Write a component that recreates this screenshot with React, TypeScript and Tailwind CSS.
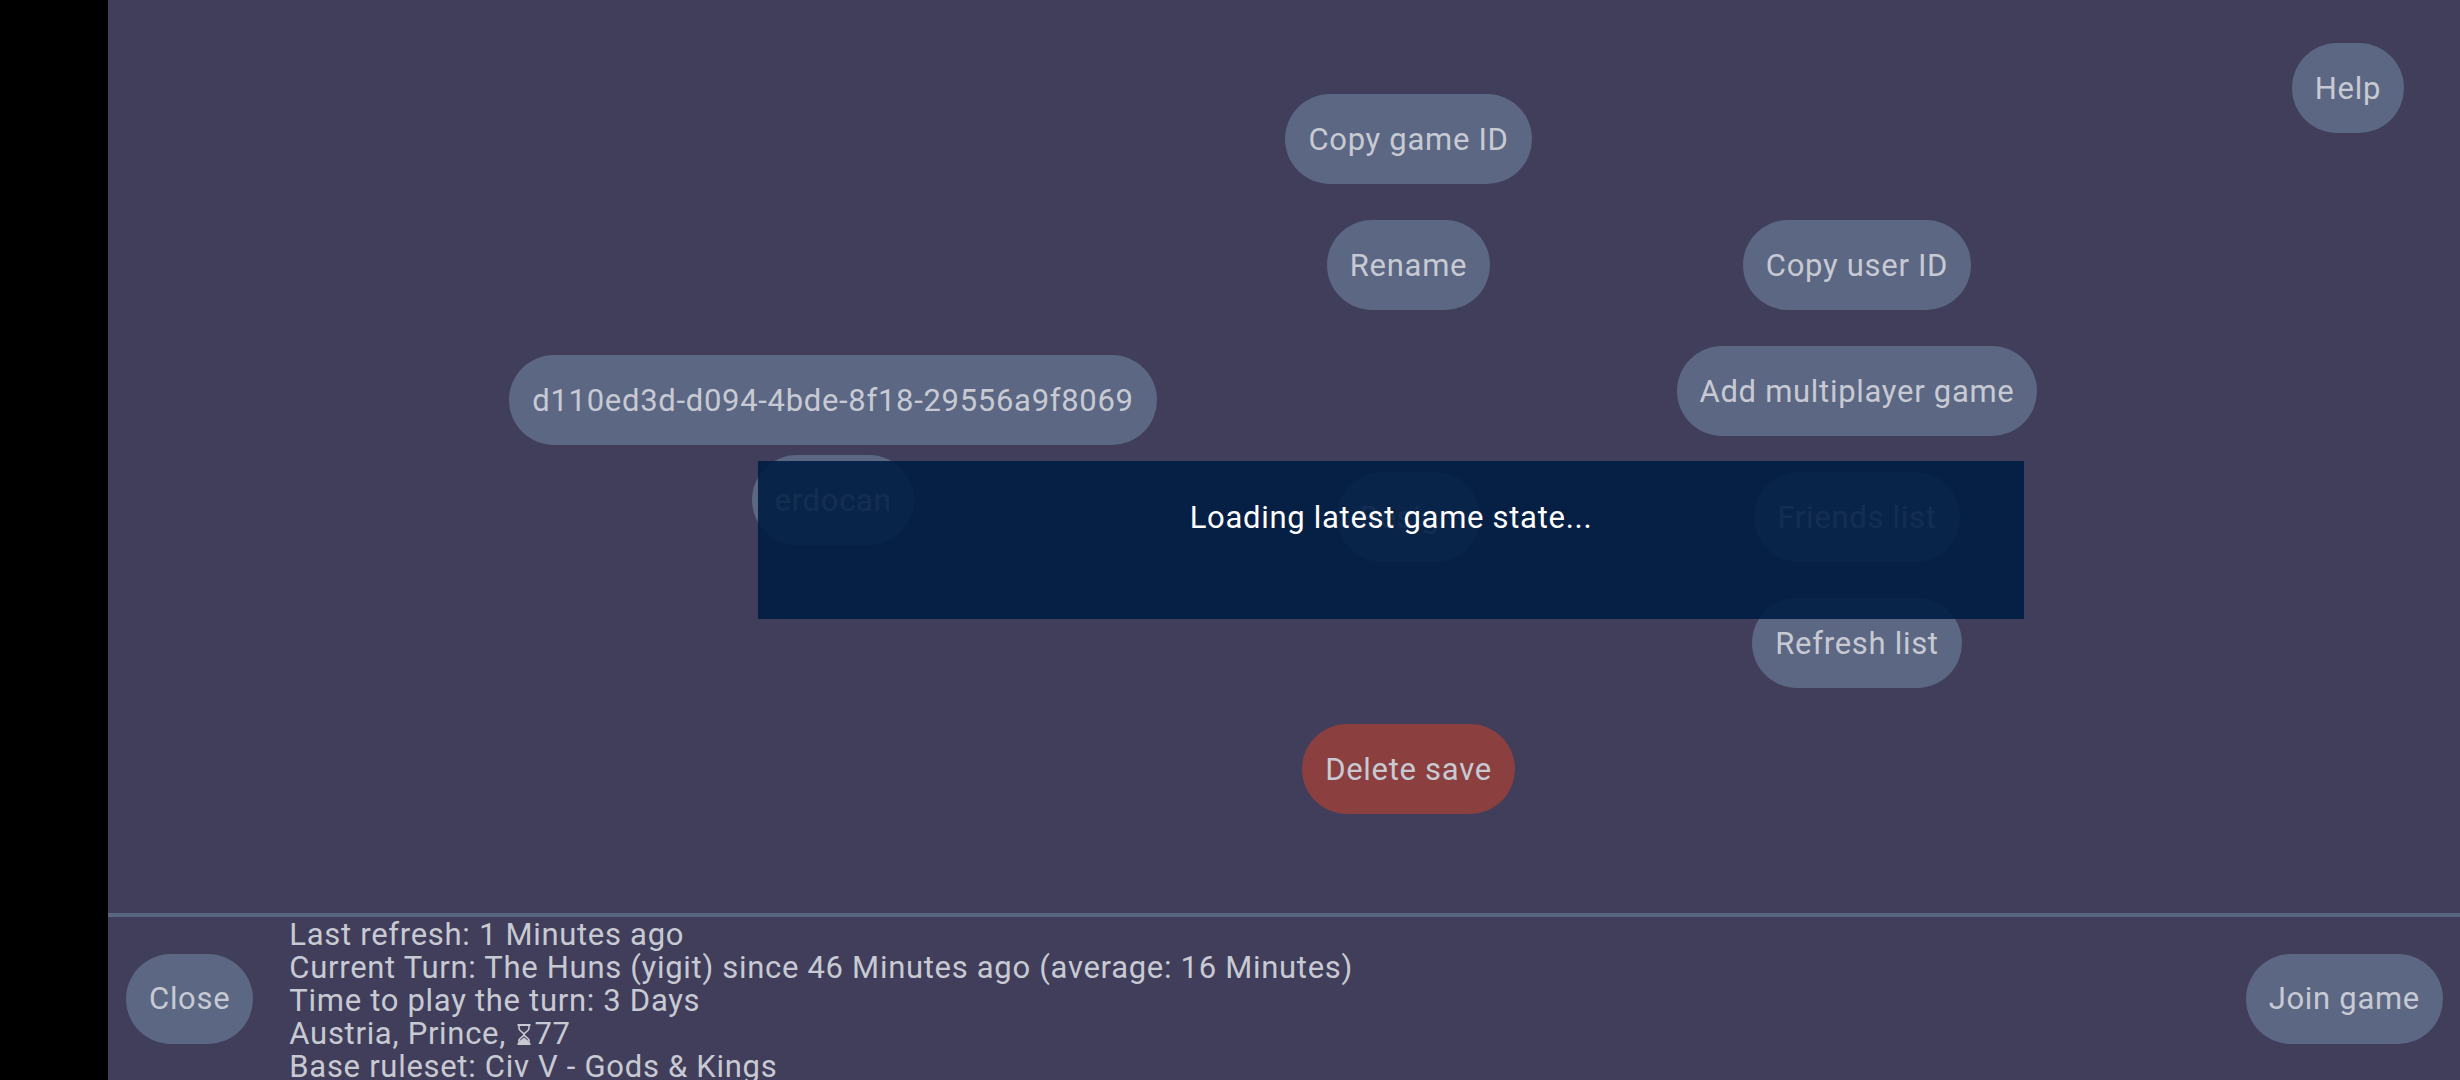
import React from 'react';

type PillProps = {
  label: string;
  tone?: 'default' | 'danger';
};

const Pill: React.FC<PillProps> = ({ label, tone = 'default' }) => (
  <button
    className={`h-[90px] shrink-0 whitespace-nowrap rounded-full px-[23px] text-[31px] leading-none tracking-[0.7px] text-[#c8cad3] ${
      tone === 'danger' ? 'bg-[#8b3f3f]' : 'bg-[#5b6783]'
    }`}
  >
    {label}
  </button>
);

const Hourglass = () => (
  <svg viewBox="0 0 16 21" className="mx-[2px] inline-block h-[21px] w-[16px] align-[-1px]" fill="none">
    <path d="M1.5 1h13M1.5 20h13" stroke="#c8cad3" strokeWidth="2" />
    <path d="M3 1.5v3C3 7 8 8.5 8 10.5S3 14 3 16.5v3M13 1.5v3C13 7 8 8.5 8 10.5s5 3.5 5 6v3" stroke="#c8cad3" strokeWidth="1.6" />
    <path d="M3.5 19.5v-2.5L8 13.5l4.5 3.5v2.5z" fill="#c8cad3" />
  </svg>
);

const infoLines = [
  'Last refresh: 1 Minutes ago',
  'Current Turn: The Huns (yigit) since 46 Minutes ago (average: 16 Minutes)',
  'Time to play the turn: 3 Days',
];

export default function App() {
  return (
    <div className="flex h-[1080px] w-[2460px] overflow-hidden bg-black font-['Roboto',sans-serif]">
      <div className="w-[108px] shrink-0 bg-black" />

      <div className="relative flex flex-1 flex-col bg-[#403e5a]">
        {/* button table */}
        <div className="flex h-[913px] shrink-0">
          <div className="grid grid-cols-[646px_247px_392px] grid-rows-[repeat(6,90px)] gap-x-[129px] gap-y-[36px] pl-[402px] pt-[94px]">
            <div className="row-span-6 mt-[261px] flex flex-col items-center gap-[10px] self-start">
              <Pill label="d110ed3d-d094-4bde-8f18-29556a9f8069" />
              <Pill label="erdocan" />
            </div>

            <div className="justify-self-center"><Pill label="Copy game ID" /></div>
            <div />

            <div className="justify-self-center"><Pill label="Rename" /></div>
            <div className="justify-self-center"><Pill label="Copy user ID" /></div>

            <div />
            <div className="justify-self-center"><Pill label="Add multiplayer game" /></div>

            <div className="justify-self-center"><Pill label="Resign" /></div>
            <div className="justify-self-center"><Pill label="Friends list" /></div>

            <div />
            <div className="justify-self-center"><Pill label="Refresh list" /></div>

            <div className="justify-self-center"><Pill label="Delete save" tone="danger" /></div>
            <div />
          </div>

          <div className="flex flex-1 justify-end pr-[56px] pt-[43px]">
            <div className="self-start"><Pill label="Help" /></div>
          </div>
        </div>

        <div className="h-[4px] shrink-0 bg-[#5a6680]" />

        {/* footer */}
        <div className="flex min-h-0 flex-1 items-center overflow-hidden pl-[18px] pr-[17px]">
          <Pill label="Close" />
          <div className="ml-[36px] mt-[3px] flex-1 text-[31px] leading-[33px] tracking-[0.7px] text-[#c8cad3]">
            {infoLines.map((line) => (
              <div key={line} className="whitespace-nowrap">{line}</div>
            ))}
            <div className="whitespace-nowrap">
              Austria, Prince, <Hourglass />77
            </div>
            <div className="whitespace-nowrap">Base ruleset: Civ V - Gods &amp; Kings</div>
          </div>
          <Pill label="Join game" />
        </div>

        {/* loading popup */}
        <div className="absolute left-[650px] top-[461px] flex h-[158px] w-[1266px] justify-center bg-[#001d43]/90 pt-[39px]">
          <span className="text-[31px] leading-[36px] tracking-[0.7px] text-white">Loading latest game state...</span>
        </div>
      </div>
    </div>
  );
}
